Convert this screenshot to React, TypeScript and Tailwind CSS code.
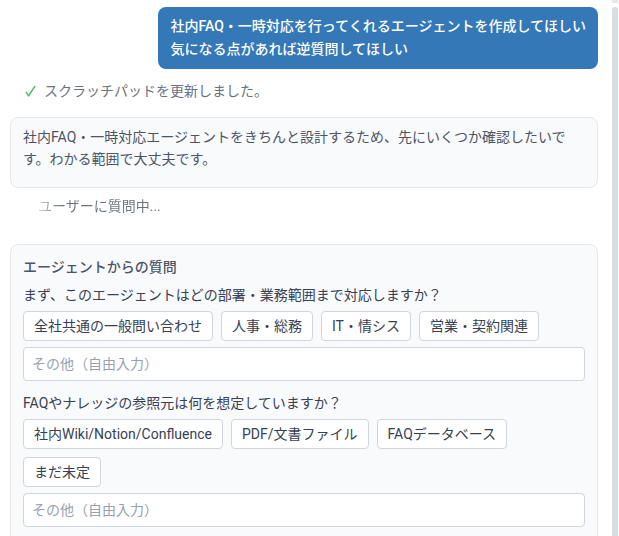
import { useState } from "react";

const questions = [
  {
    id: "scope",
    label: "まず、このエージェントはどの部署・業務範囲まで対応しますか？",
    options: ["全社共通の一般問い合わせ", "人事・総務", "IT・情シス", "営業・契約関連"],
  },
  {
    id: "source",
    label: "FAQやナレッジの参照元は何を想定していますか？",
    options: [
      "社内Wiki/Notion/Confluence",
      "PDF/文書ファイル",
      "FAQデータベース",
      "まだ未定",
    ],
  },
];

const Question = ({ question }: { question: (typeof questions)[number] }) => {
  const [value, setValue] = useState("");

  return (
    <div>
      <label htmlFor={question.id} className="block text-gray-700">
        {question.label}
      </label>
      <div className="mt-1.5 flex flex-wrap gap-2">
        {question.options.map((option) => (
          <button
            key={option}
            type="button"
            onClick={() => setValue(option)}
            className="rounded border border-gray-300 bg-white px-2.5 py-1 text-gray-700"
          >
            {option}
          </button>
        ))}
      </div>
      <input
        id={question.id}
        type="text"
        value={value}
        onChange={(e) => setValue(e.target.value)}
        placeholder="その他（自由入力）"
        className="mt-1.5 block h-[34px] w-full rounded border border-gray-300 bg-white px-2 text-gray-700 placeholder:text-gray-400"
      />
    </div>
  );
};

const App = () => {
  return (
    <div className="flex h-screen overflow-hidden bg-white font-[Roboto,'Noto_Sans_CJK_JP',sans-serif] text-sm leading-5">
      <div className="min-w-0 flex-1 overflow-hidden pt-[7px] pr-3.5 pl-2.5">
        <div className="ml-auto w-fit rounded-lg bg-[#3578b8] px-3 py-2 leading-[23px] font-medium text-white">
          <p>社内FAQ・一時対応を行ってくれるエージェントを作成してほしい</p>
          <p>気になる点があれば逆質問してほしい</p>
        </div>

        <div className="mt-3 flex items-center gap-2 pl-3.5 text-gray-500">
          <svg viewBox="0 0 12 12" className="h-3 w-3" fill="none">
            <path
              d="M2 6.6 4.5 11 11 1"
              stroke="#4ac26b"
              strokeWidth="1.4"
              strokeLinejoin="round"
            />
          </svg>
          スクラッチパッドを更新しました。
        </div>

        <div className="mt-4 rounded-lg border border-gray-200 bg-gray-50 px-3 pt-2 pb-[17px] leading-[22px] text-gray-600">
          社内FAQ・一時対応エージェントをきちんと設計するため、先にいくつか確認したいです。わかる範囲で大丈夫です。
        </div>

        <div className="mt-2 pl-7">
          <span className="bg-linear-to-r from-gray-300 via-gray-500 via-20% to-gray-500 bg-clip-text text-transparent">
            ユーザーに質問中...
          </span>
        </div>

        <div className="mt-7 rounded-lg border border-gray-200 bg-gray-50 px-3 pt-3 pb-8">
          <h2 className="font-medium text-gray-600">エージェントからの質問</h2>
          <div className="mt-2 flex flex-col gap-3">
            {questions.map((question) => (
              <Question key={question.id} question={question} />
            ))}
          </div>
        </div>
      </div>

      {/* scrollbar */}
      <div className="flex w-[7px] shrink-0 flex-col gap-1 bg-white pr-px">
        <div className="h-[3px] bg-gray-200" />
        <div className="flex-1 rounded-t-sm bg-[#d9dde3]" />
      </div>
    </div>
  );
};

export default App;
